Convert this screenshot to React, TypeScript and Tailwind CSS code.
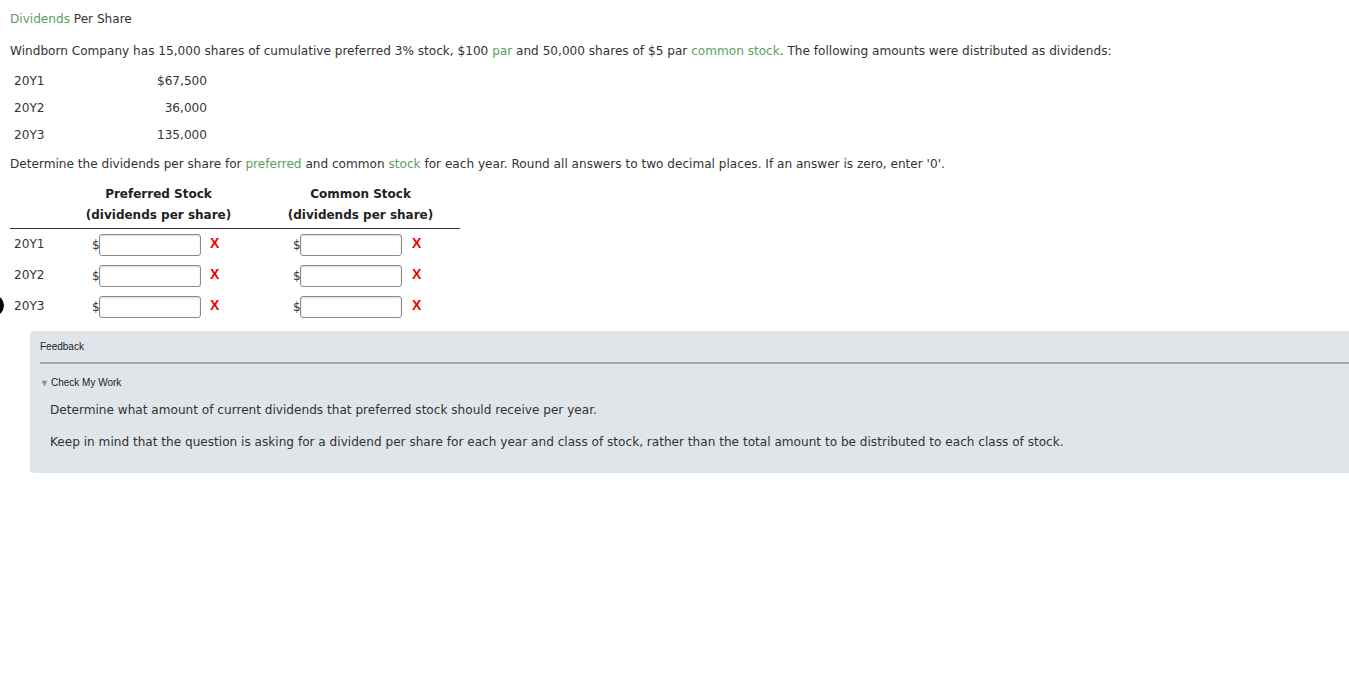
const font = "font-['DejaVu_Sans',Verdana,sans-serif]";

const years = [
  { year: "20Y1", amount: "$67,500" },
  { year: "20Y2", amount: "36,000" },
  { year: "20Y3", amount: "135,000" },
];

function Green({ children }: { children: React.ReactNode }) {
  return <span className="text-[#5c9e5c]">{children}</span>;
}

function AnswerInput() {
  return (
    <>
      <span className="w-[7px] text-[12px] leading-none text-[#333]">$</span>
      <input
        type="text"
        className="h-[22px] w-[102px] rounded-[3px] border border-[#8a8a8a] bg-white shadow-[inset_0_1px_2px_rgba(0,0,0,0.15)] outline-none"
      />
    </>
  );
}

function WrongMark() {
  return <span className="text-[14px] font-bold leading-none text-[#ee0000] font-['Liberation_Sans',Arial,sans-serif]">X</span>;
}

export default function App() {
  return (
    <div className={`relative min-h-screen overflow-hidden bg-white text-[12.1px] text-[#333] ${font}`}>
      {/* partial dot at left edge */}
      <div className="absolute left-[-18px] top-[295px] h-[21px] w-[22px] rounded-full bg-black" />

      <div className="px-[10px] pt-[11px]">
        <h1 className="text-[12.1px] leading-[16px]">
          <Green>Dividends</Green> Per Share
        </h1>

        <p className="mt-[16px] leading-[16px]">
          Windborn Company has 15,000 shares of cumulative preferred 3% stock, $100 <Green>par</Green> and 50,000 shares
          of $5 par <Green>common stock</Green>. The following amounts were distributed as dividends:
        </p>

        <div className="mt-[9px]">
          {years.map((y) => (
            <div key={y.year} className="flex h-[27px] items-center">
              <span className="w-[80px] pl-[4px]">{y.year}</span>
              <span className="w-[117px] text-right">{y.amount}</span>
            </div>
          ))}
        </div>

        <p className="mt-[7px] leading-[16px]">
          Determine the dividends per share for <Green>preferred</Green> and common <Green>stock</Green> for each year.
          Round all answers to two decimal places. If an answer is zero, enter '0'.
        </p>

        <div className="mt-[12px] w-[450px]">
          <div className="flex whitespace-nowrap border-b border-[#333] pb-[2px] font-bold text-[12px] leading-[21px] text-[#222]">
            <div className="w-[75px]" />
            <div className="w-[147px] text-center">
              Preferred Stock
              <br />
              (dividends per share)
            </div>
            <div className="w-[55px]" />
            <div className="w-[147px] text-center">
              Common Stock
              <br />
              (dividends per share)
            </div>
          </div>

          <div>
            {["20Y1", "20Y2", "20Y3"].map((yr) => (
              <div key={yr} className="flex h-[31px] items-center">
                <span className="w-[82px] pl-[4px]">{yr}</span>
                <AnswerInput />
                <span className="w-[92px] pl-[9px]">
                  <WrongMark />
                </span>
                <AnswerInput />
                <span className="pl-[10px]">
                  <WrongMark />
                </span>
              </div>
            ))}
          </div>
        </div>
      </div>

      <div className="ml-[30px] mr-[-20px] mt-[9px] rounded-[4px] bg-[#dfe5e9] pb-[23px] pl-[10px]">
        <div className="h-[33px] border-b-2 border-[#a2a6a8] pt-[10px] text-[10px] leading-[12px] text-[#222] font-['Liberation_Sans',Arial,sans-serif]">
          Feedback
        </div>
        <div className="mt-[13px] flex items-center text-[10px] leading-[12px] text-[#222] font-['Liberation_Sans',Arial,sans-serif]">
          <span className="mr-[2px] text-[9px] text-[#8a8a8a]">▼</span>
          Check My Work
        </div>
        <div className="pl-[10px]">
          <p className="mt-[13px] leading-[16px]">Determine what amount of current dividends that preferred stock should receive per year.</p>
          <p className="mt-[16px] leading-[16px]">
            Keep in mind that the question is asking for a dividend per share for each year and class of stock, rather than
            the total amount to be distributed to each class of stock.
          </p>
        </div>
      </div>
    </div>
  );
}
